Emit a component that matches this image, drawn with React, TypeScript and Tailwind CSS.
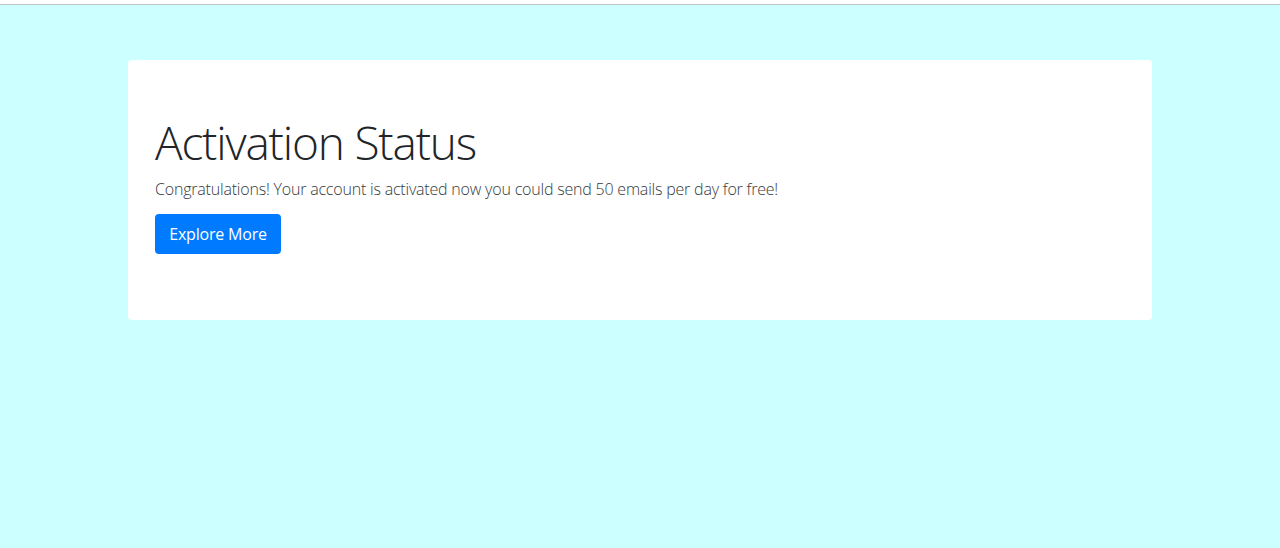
export default function App() {
  return (
    <div className="min-h-[548px] bg-[#ccffff] border-t-4 border-t-white font-['Open_Sans',sans-serif]">
      <div className="h-px bg-[#bfc4c4]" />
      <div className="mx-auto mt-[55px] w-[1024px] h-[260px] bg-white rounded-[4px] px-[27px] pt-[55px]">
        <h1 className="text-[46px] leading-[1.2] font-light text-[#212529] tracking-[-1.2px]">
          Activation Status
        </h1>
        <p className="mt-[7px] text-[16px] leading-[1.5] font-light text-[#343a40] tracking-[-0.2px]">
          Congratulations! Your account is activated now you could send 50 emails per day for free!
        </p>
        <button className="mt-[13px] h-[40px] w-[126px] rounded-[4px] bg-[#007bff] text-white text-[16px] leading-none tracking-[-0.2px]">
          Explore More
        </button>
      </div>
    </div>
  );
}
